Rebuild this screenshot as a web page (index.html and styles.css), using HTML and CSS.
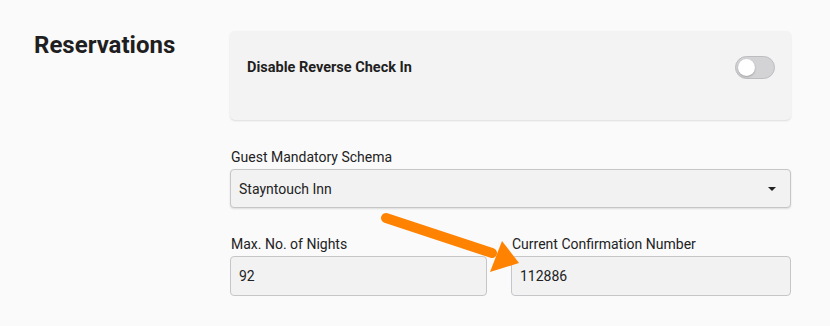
FILE: index.html
```html
<!DOCTYPE html>
<html lang="en">
<head>
  <meta charset="UTF-8" />
  <meta name="viewport" content="width=device-width, initial-scale=1.0" />
  <title>Reservations</title>
  <link rel="stylesheet" href="styles.css">
</head>
<body>
  <section class="settings">
    <h2 class="section-title">Reservations</h2>

    <div class="section-body">
      <div class="toggle-card">
        <span class="toggle-label">Disable Reverse Check In</span>
        <span class="switch"><span class="knob"></span></span>
      </div>

      <div class="field">
        <label>Guest Mandatory Schema</label>
        <div class="select">
          <span>Stayntouch Inn</span>
          <span class="caret"></span>
        </div>
      </div>

      <div class="field-row">
        <div class="field">
          <label>Max. No. of Nights</label>
          <input type="text" value="92" />
        </div>
        <div class="field wide">
          <label>Current Confirmation Number</label>
          <input type="text" value="112886" />
        </div>
      </div>
    </div>

    <svg class="arrow" width="150" height="70" viewBox="0 0 150 70">
      <line x1="6" y1="13" x2="112" y2="48" stroke="#ff8200" stroke-width="10" stroke-linecap="round" />
      <polygon points="139,58 122,36 110,67" fill="#ff8200" />
    </svg>
  </section>
</body>
</html>
```

FILE: styles.css
```css
body {
  margin: 0;
  background: #fafafb;
  font-family: Roboto, 'Noto Sans', sans-serif;
  color: #222;
}

.settings {
  position: relative;
  display: flex;
  padding: 30px 39px 30px 34px;
}

.section-title {
  width: 196px;
  margin: 0;
  font-size: 24px;
  line-height: 30px;
  font-weight: 700;
  color: #1f1f21;
}

.section-body {
  flex: 1;
  display: flex;
  flex-direction: column;
  gap: 28px;
  margin-top: 1px;
}

.toggle-card {
  display: flex;
  justify-content: space-between;
  align-items: center;
  height: 89px;
  box-sizing: border-box;
  padding: 0 16px 16px 17px;
  background: #f3f3f4;
  border-radius: 5px;
  box-shadow: 0 1px 2px rgba(0, 0, 0, 0.12);
}

.toggle-label {
  font-size: 14.5px;
  font-weight: 700;
  color: #1f1f21;
}

.switch {
  width: 40px;
  height: 23px;
  box-sizing: border-box;
  border: 1px solid #bdbdc0;
  border-radius: 12px;
  background: #d3d3d5;
  display: flex;
  align-items: center;
  padding: 2px;
}

.knob {
  width: 17px;
  height: 17px;
  border-radius: 50%;
  background: #fff;
  box-shadow: 0 1px 2px rgba(0, 0, 0, 0.25);
}

.field {
  display: flex;
  flex-direction: column;
  gap: 3px;
}

.field label {
  font-size: 14px;
  line-height: 18px;
  color: #222;
  padding-left: 1px;
}

.select,
.field input {
  height: 40px;
  box-sizing: border-box;
  border: 1px solid #c6c6c9;
  border-radius: 4px;
  background: #f2f2f3;
  font-family: inherit;
  font-size: 14px;
  color: #222;
  padding: 0 8px;
}

.select {
  height: 39px;
  display: flex;
  justify-content: space-between;
  align-items: center;
  box-shadow: 0 1px 2px rgba(0, 0, 0, 0.12);
}

.caret {
  width: 0;
  height: 0;
  border-left: 4px solid transparent;
  border-right: 4px solid transparent;
  border-top: 4px solid #222;
  margin-right: 6px;
}

.field input {
  outline: none;
  width: 100%;
}

.field-row {
  display: flex;
  gap: 24px;
  margin-top: -1px;
}

.field-row .field {
  width: 257px;
}

.field-row .field.wide {
  flex: 1;
}

.arrow {
  position: absolute;
  left: 380px;
  top: 205px;
}
```
